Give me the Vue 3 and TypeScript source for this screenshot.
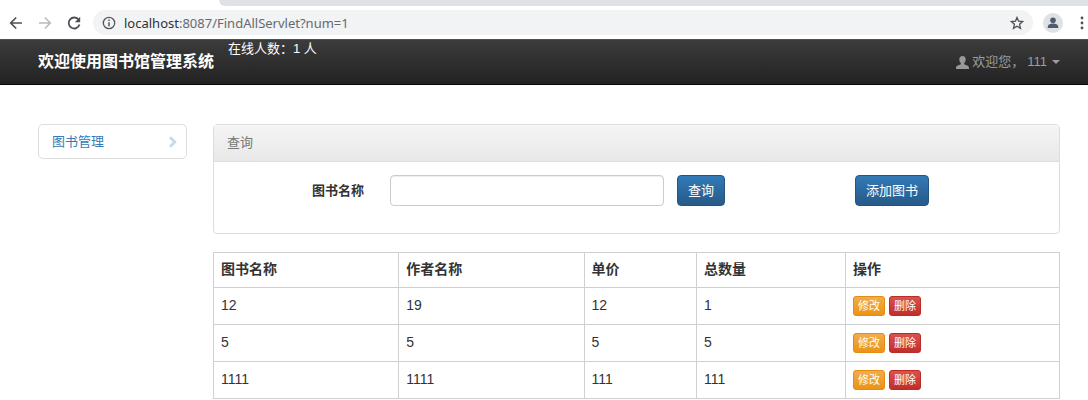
<script setup lang="ts">
import { ref } from 'vue'

interface Book {
  name: string
  author: string
  price: string
  total: string
}

const address = ref('localhost:8087/FindAllServlet?num=1')
const keyword = ref('')
const headers: string[] = ['图书名称', '作者名称', '单价', '总数量', '操作']
const books = ref<Book[]>([
  { name: '12', author: '19', price: '12', total: '1' },
  { name: '5', author: '5', price: '5', total: '5' },
  { name: '1111', author: '1111', price: '111', total: '111' },
])
</script>

<template>
  <div class="browser">
    <div class="tabs"><span class="tab"></span><span class="strip"></span></div>
    <div class="toolbar">
      <button class="tool" type="button" aria-label="Back">
        <svg width="16" height="16" viewBox="0 0 16 16" fill="none" stroke="#4d5156" stroke-width="1.7"><path d="M14 8H3M8.2 2.5 2.7 8l5.500 5.500" /></svg>
      </button>
      <button class="tool" type="button" aria-label="Forward">
        <svg width="16" height="16" viewBox="0 0 16 16" fill="none" stroke="#b9bbbe" stroke-width="1.6"><path d="M2 8h11M7.800 2.500 13.300 8l-5.500 5.500" /></svg>
      </button>
      <button class="tool" type="button" aria-label="Reload">
        <svg width="16" height="16" viewBox="0 0 16 16"><path d="M12.700 4.800A5.500 5.500 0 1 0 13.500 9.500" fill="none" stroke="#4d5156" stroke-width="1.800" /><path d="M14.200 1.800v5.400H8.800z" fill="#4d5156" /></svg>
      </button>
      <div class="address">
        <svg width="14" height="14" viewBox="0 0 14 14" fill="none" stroke="#54585d"><circle cx="7" cy="7" r="5.700" stroke-width="1.300" /><path d="M7 6.200v4M7 3.500v1.500" stroke-width="1.500" /></svg>
        <a class="url" :href="'http://' + address"><span class="host">localhost</span>:8087/FindAllServlet?num=1</a>
        <button class="tool" type="button" aria-label="Bookmark">
          <svg width="14" height="14" viewBox="0 0 14 14" fill="none" stroke="#4d5156" stroke-width="1.300"><path d="m7 1.500 1.600 3.700 4 .4-3 2.700.9 4L7 10.200l-3.500 2.100.9-4-3-2.700 4-.4z" /></svg>
        </button>
      </div>
      <button class="tool profile" type="button" aria-label="Profile">
        <svg width="20" height="20" viewBox="0 0 20 20"><circle cx="10" cy="10" r="10" fill="#dee1e6" /><circle cx="10" cy="7.200" r="2.800" fill="#4f5b6c" /><path d="M4.800 15v-1.500c0-4 10.400-4 10.400 0V15z" fill="#4f5b6c" /></svg>
      </button>
      <button class="tool" type="button" aria-label="Menu">
        <svg width="4" height="14" viewBox="0 0 4 14" fill="#4d5156"><circle cx="2" cy="2" r="1.400" /><circle cx="2" cy="7" r="1.400" /><circle cx="2" cy="12" r="1.400" /></svg>
      </button>
    </div>
  </div>

  <header class="navbar">
    <h1 class="brand">欢迎使用图书馆管理系统</h1>
    <span class="online">在线人数：1 人</span>
    <button class="user" type="button">
      <svg width="13" height="13" viewBox="0 0 13 13" fill="#999"><path d="M6.500 0c2 0 3.200 1.300 3.200 3.300 0 1.600-.6 2.900-1.500 3.700v1.300c1.900.9 4.800 1.400 4.800 3.400V13H0v-1.300C0 9.700 2.900 9.200 4.800 8.300V7C3.900 6.200 3.300 4.900 3.300 3.300 3.300 1.300 4.500 0 6.500 0z" /></svg>
      <span>欢迎您，</span>
      <span class="name">111</span>
      <span class="caret"></span>
    </button>
  </header>

  <div class="page">
    <nav class="side">
      <a class="side-link" href="#books">
        图书管理
        <svg width="10" height="12" viewBox="0 0 10 12" fill="none" stroke="#c5daea" stroke-width="2.800"><path d="m2 1.200 4.800 4.800L2 10.800" /></svg>
      </a>
    </nav>

    <main id="books" class="content">
      <section class="panel">
        <h2 class="panel-title">查询</h2>
        <form class="search" @submit.prevent>
          <label for="keyword">图书名称</label>
          <input id="keyword" v-model="keyword" type="text" />
          <div class="cell"><button class="btn" type="submit">查询</button></div>
          <div class="cell"><button class="btn" type="button">添加图书</button></div>
        </form>
      </section>

      <table class="books">
        <colgroup>
          <col class="wide" /><col class="wide" /><col class="price" /><col class="total" /><col />
        </colgroup>
        <thead>
          <tr><th v-for="h in headers" :key="h" scope="col">{{ h }}</th></tr>
        </thead>
        <tbody>
          <tr v-for="b in books" :key="b.name">
            <td>{{ b.name }}</td>
            <td>{{ b.author }}</td>
            <td>{{ b.price }}</td>
            <td>{{ b.total }}</td>
            <td>
              <div class="actions">
                <button class="mini edit" type="button">修改</button>
                <button class="mini remove" type="button">删除</button>
              </div>
            </td>
          </tr>
        </tbody>
      </table>
    </main>
  </div>
</template>

<style>
body {
  background: #fff;
  color: #333;
  font-family: "Liberation Sans", "Noto Sans CJK SC", sans-serif;
  font-size: 13px;
  line-height: 18px;
}
</style>

<style scoped>
* {
  box-sizing: border-box;
}
button,
input {
  font: inherit;
  margin: 0;
}
button {
  cursor: pointer;
}
svg {
  display: block;
  flex: none;
}
.tabs {
  display: flex;
  height: 6px;
  background: #fff;
}
.tab {
  width: 219px;
}
.strip {
  flex: 1;
  background: #dee1e6;
  border-bottom-left-radius: 6px;
}
.toolbar {
  display: flex;
  align-items: center;
  gap: 13px;
  height: 33px;
  padding: 0 4px 0 8px;
}
.tool {
  padding: 0;
  border: 0;
  background: none;
}
.address {
  display: flex;
  flex: 1;
  align-items: center;
  gap: 8px;
  height: 25px;
  margin-left: -2px;
  padding: 0 9px;
  border-radius: 13px;
  background: #f1f3f4;
}
.url {
  flex: 1;
  color: #666a6e;
  font-family: "Noto Sans", sans-serif;
  font-size: 13px;
  text-decoration: none;
}
.host {
  color: #303134;
}
.profile {
  margin: 0 4px 0 -3px;
}
.navbar {
  display: flex;
  align-items: center;
  height: 46px;
  padding: 0 28px 0 38px;
  border-top: 1px solid #505050;
  border-bottom: 1px solid #080808;
  background: linear-gradient(#3c3c3c, #222);
  color: #fff;
}
.brand {
  margin: 0 14px 0 0;
  font-size: 16px;
  line-height: 20px;
}
.online {
  align-self: flex-start;
}
.user {
  display: flex;
  align-items: center;
  gap: 3px;
  margin-left: auto;
  padding: 0;
  border: 0;
  background: none;
  color: #9d9d9d;
}
.caret {
  margin-left: 2px;
  border: 4px solid transparent;
  border-top-color: #9d9d9d;
  border-bottom: 0;
}
.page {
  display: grid;
  grid-template-columns: 149fr 847fr;
  gap: 26px;
  padding: 39px 28px 0 38px;
}
.side-link {
  display: flex;
  align-items: center;
  justify-content: space-between;
  height: 35px;
  padding: 0 8px 0 13px;
  border: 1px solid #ddd;
  border-radius: 5px;
  color: #337ab7;
  text-decoration: none;
}
.panel {
  margin-bottom: 18px;
  border: 1px solid #ddd;
  border-radius: 4px;
}
.panel-title {
  margin: 0;
  padding: 9px 13px;
  border-bottom: 1px solid #ddd;
  background: linear-gradient(#f5f5f5, #e8e8e8);
  color: #777;
  font-size: 13px;
  font-weight: 400;
  line-height: 18px;
}
.search {
  display: grid;
  grid-template-columns: 163fr 287fr 178fr 217fr;
  align-items: center;
  padding: 13px 0 27px;
}
.search label {
  padding-right: 13px;
  font-weight: 700;
  text-align: right;
}
.search input {
  width: auto;
  min-width: 0;
  height: 31px;
  margin-left: 13px;
  padding: 0 10px;
  border: 1px solid #ccc;
  border-radius: 4px;
  box-shadow: inset 0 1px 1px rgba(0, 0, 0, 0.075);
}
.cell {
  padding-left: 13px;
}
.btn {
  height: 31px;
  padding: 0 10px;
  border: 1px solid #245580;
  border-radius: 4px;
  background: linear-gradient(#337ab7, #265a88);
  color: #fff;
}
.books {
  width: 100%;
  border-collapse: collapse;
  table-layout: fixed;
}
.wide {
  width: 21.9%;
}
.price {
  width: 13.3%;
}
.total {
  width: 17.6%;
}
.books th,
.books td {
  padding: 6px 7px 8px;
  border: 1px solid #d0d0d0;
  font-size: 14px;
  line-height: 20px;
  text-align: left;
}
.actions {
  display: flex;
  gap: 4px;
  align-items: center;
  padding-top: 2px;
}
.mini {
  height: 20px;
  padding: 0 4px;
  border: 1px solid;
  border-radius: 3px;
  color: #fff;
  font-size: 11px;
  line-height: 16px;
}
.edit {
  border-color: #e38d13;
  background: linear-gradient(#f0ad4e, #eb9316);
}
.remove {
  border-color: #b92c28;
  background: linear-gradient(#d9534f, #c12e2a);
}
</style>
